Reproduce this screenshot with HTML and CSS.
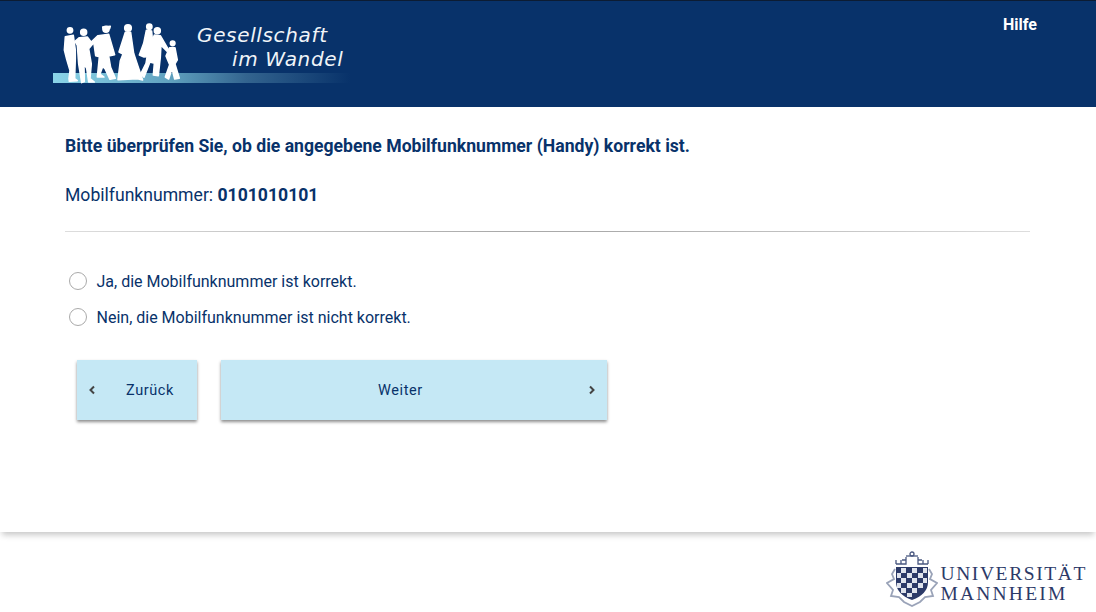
FILE: index.html
```html
<!DOCTYPE html>
<html lang="de">
<head>
    <meta charset="UTF-8">
    <meta name="viewport" content="width=device-width, initial-scale=1.0">
    <title>Gesellschaft im Wandel</title>
    <link rel="stylesheet" href="styles.css">
</head>
<body>
    <header class="top">
        <div class="logo">
            <svg class="logo_art" width="300" height="80" viewBox="0 0 300 80">
                <defs>
                    <linearGradient id="stripe">
                        <stop offset="0" stop-color="#8ad4e8"/>
                        <stop offset="0.4" stop-color="#5fa0be"/>
                        <stop offset="0.65" stop-color="#33648f"/>
                        <stop offset="1" stop-color="#08326a"/>
                    </linearGradient>
                </defs>
                <rect x="0" y="59" width="297" height="10" fill="url(#stripe)"/>
                <g transform="translate(-13 -14) scale(0.3333)" fill="#fff" stroke="#fff" stroke-width="4.5" stroke-linejoin="round">
                    <circle cx="90" cy="91" r="8"/>
                    <path d="M76 110 L100 106 L106 150 L106 176 L104 236 L112 242 L88 244 L87 236 L90 212 L80 178 L73 150Z"/>
                    <circle cx="131" cy="97" r="9"/>
                    <path d="M118 113 L142 111 L158 132 L146 146 L154 192 L150 236 L163 246 L146 246 L140 205 L132 192 L133 245 L125 248 L116 192 L112 136 L105 124Z"/>
                    <circle cx="198" cy="88" r="9"/>
                    <path d="M188 81 L211 79 L209 86 L190 88Z"/>
                    <path d="M174 107 L206 103 L224 164 L206 168 L212 202 L226 235 L210 238 L195 206 L188 200 L180 222 L192 231 L172 231 L178 170 L167 167 L162 132 L152 128Z"/>
                    <circle cx="264" cy="84" r="10"/>
                    <path d="M256 97 L272 97 L281 160 L295 202 L308 240 L292 236 L234 239 L241 182 L249 162 L237 156Z"/>
                    <circle cx="328" cy="80" r="8"/>
                    <path d="M319 91 L335 93 L340 150 L346 168 L312 171 L298 165 L311 130Z"/>
                    <circle cx="352" cy="92" r="9"/>
                    <path d="M343 105 L361 107 L385 148 L381 154 L363 136 L361 172 L355 227 L340 225 L343 190 L330 186 L312 232 L302 222 L318 190 L323 160Z"/>
                    <circle cx="398" cy="130" r="7"/>
                    <path d="M389 143 L405 143 L412 180 L405 192 L418 235 L404 237 L396 206 L386 237 L376 231 L389 194 L378 168Z"/>
                </g>
            </svg>
            <div class="logo_text">
                <span>Gesellschaft</span>
                <span class="logo_second">im Wandel</span>
            </div>
        </div>
        <a class="help">Hilfe</a>
    </header>

    <main class="content">
        <p class="question">Bitte überprüfen Sie, ob die angegebene Mobilfunknummer (Handy) korrekt ist.</p>
        <p class="number">Mobilfunknummer: <b>0101010101</b></p>
        <hr class="line">
        <div class="answers">
            <label class="answer"><span class="radio"></span>Ja, die Mobilfunknummer ist korrekt.</label>
            <label class="answer"><span class="radio"></span>Nein, die Mobilfunknummer ist nicht korrekt.</label>
        </div>
        <div class="buttons">
            <button class="btn btn_back">
                <svg class="chev" width="8" height="10" viewBox="0 0 8 10"><path d="M6 1.5 L2.5 5 L6 8.5" fill="none" stroke="#444" stroke-width="2"/></svg>
                <span class="btn_label">Zurück</span>
            </button>
            <button class="btn btn_next">
                <span class="btn_label">Weiter</span>
                <svg class="chev" width="8" height="10" viewBox="0 0 8 10"><path d="M2 1.5 L5.5 5 L2 8.5" fill="none" stroke="#444" stroke-width="2"/></svg>
            </button>
        </div>
    </main>

    <footer class="bottom">
        <div class="uni">
            <svg class="crest" width="52" height="58" viewBox="0 0 52 58">
                <g fill="none" stroke="#4a5880" stroke-width="1.3">
                    <path d="M10 14 H20 V7 M10 14 V10 M15 14 V10 M20 10 H16"/>
                    <path d="M42 14 H32 V7 M42 14 V10 M37 14 V10 M32 10 H36"/>
                    <path d="M20 6 H32"/>
                    <circle cx="26" cy="4" r="2"/>
                    <path d="M9 19 L6 24 L8 29 L1 33 L7 40 L5 46 L13 47 L18 52 L26 56 L34 52 L39 47 L47 46 L45 40 L51 33 L44 29 L46 24 L43 19" stroke="#9aa3b8" stroke-width="1.8"/>
                </g>
                <path d="M10 17 H42 V32 Q42 44 26 50 Q10 44 10 32Z" fill="#2c3a68"/>
                <g fill="#dfe3ec">
                    <rect x="15" y="18" width="5" height="5"/>
                    <rect x="26" y="18" width="5" height="5"/>
                    <rect x="37" y="18" width="4" height="5"/>
                    <rect x="11" y="23" width="4" height="5"/>
                    <rect x="21" y="23" width="5" height="5"/>
                    <rect x="32" y="23" width="5" height="5"/>
                    <rect x="15" y="28" width="5" height="5"/>
                    <rect x="26" y="28" width="5" height="5"/>
                    <rect x="37" y="28" width="4" height="5"/>
                    <rect x="11" y="33" width="4" height="5"/>
                    <rect x="21" y="33" width="5" height="5"/>
                    <rect x="32" y="33" width="5" height="5"/>
                    <rect x="15" y="38" width="5" height="5"/>
                    <rect x="26" y="38" width="5" height="5"/>
                    <rect x="21" y="43" width="5" height="4"/>
                </g>
            </svg>
            <div class="uni_name">
                <span>UNIVERSITÄT</span>
                <span class="uni_second">MANNHEIM</span>
            </div>
        </div>
    </footer>
</body>
</html>
```

FILE: styles.css
```css
html, body {
    margin: 0;
    padding: 0;
    background: #fff;
    font-family: Roboto, "Liberation Sans", sans-serif;
    color: #08326a;
}
.top {
    display: flex;
    justify-content: space-between;
    box-sizing: border-box;
    height: 107px;
    background: #08326a;
    border-top: 1px solid #0c1c33;
    padding: 13px 59px 0 53px;
}
.logo {
    display: flex;
    position: relative;
    width: 300px;
    height: 80px;
}
.logo_art {
    display: block;
}
.logo_text {
    position: absolute;
    top: 9px;
    left: 144px;
    display: flex;
    flex-direction: column;
    font-family: "DejaVu Sans", sans-serif;
    font-style: italic;
    font-size: 20px;
    line-height: 24px;
    letter-spacing: 0.65px;
    color: #f0f4f8;
    white-space: nowrap;
}
.logo_second {
    margin-left: 35px;
}
.help {
    color: #fff;
    font-size: 16px;
    font-weight: 700;
    line-height: 20px;
    margin-top: 1px;
}
.content {
    position: relative;
    box-sizing: border-box;
    height: 425px;
    background: #fff;
    padding: 29px 66px 0 65px;
    box-shadow: 0 5px 6px -2px rgba(0, 0, 0, 0.22);
}
.question {
    margin: 0;
    font-size: 17.6px;
    font-weight: 700;
    line-height: 20px;
}
.number {
    margin: 28px 0 0;
    font-size: 17.6px;
    line-height: 22px;
}
.line {
    margin: 25px 0 0;
    border: 0;
    height: 1px;
    background: linear-gradient(to right, #ddd, #aaa 45%, #aaa 55%, #ddd);
}
.answers {
    margin-top: 40px;
    display: flex;
    flex-direction: column;
    gap: 18px;
}
.answer {
    display: flex;
    align-items: center;
    height: 18px;
    padding-left: 4px;
    font-size: 16px;
}
.radio {
    box-sizing: border-box;
    width: 18px;
    height: 18px;
    margin-right: 9.5px;
    border: 1px solid #aaa;
    border-radius: 50%;
    background: #fff;
}
.buttons {
    display: flex;
    gap: 24px;
    margin: 34px 0 0 12px;
}
.btn {
    display: flex;
    align-items: center;
    justify-content: space-between;
    height: 60px;
    padding: 0 11px;
    border: 0;
    background: #c5e8f5;
    color: #08326a;
    font-family: Roboto, sans-serif;
    font-size: 14.5px;
    letter-spacing: 0.6px;
    box-shadow: 0 2px 3px rgba(0, 0, 0, 0.45);
}
.btn_back {
    width: 120px;
}
.btn_next {
    width: 386px;
}
.btn_back .btn_label {
    margin-right: 12px;
}
.btn_next .btn_label {
    margin-left: 146px;
}
.chev {
    display: block;
}
.bottom {
    display: flex;
    justify-content: flex-end;
    height: 80px;
    padding-right: 9px;
}
.uni {
    display: flex;
    margin-top: 17px;
}
.crest {
    display: block;
    margin-top: 1px;
    margin-right: 2px;
}
.uni_name {
    display: flex;
    flex-direction: column;
    margin-top: 15px;
    font-family: "Liberation Serif", serif;
    font-size: 19.5px;
    line-height: 20px;
    letter-spacing: 1.6px;
    color: #2c3a68;
}
.uni_second {
    letter-spacing: 2.2px;
}
```
